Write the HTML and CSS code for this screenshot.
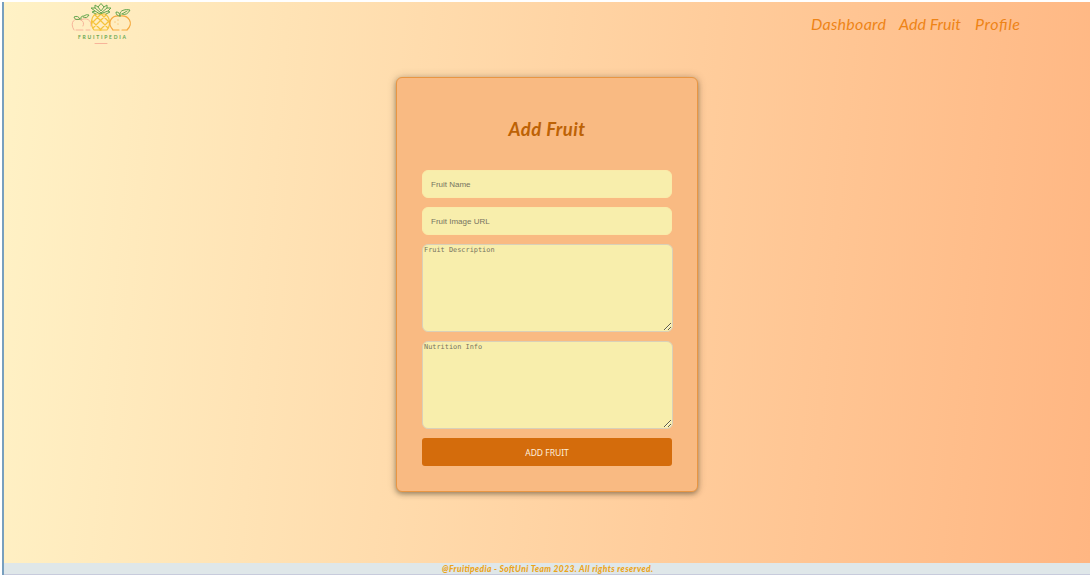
FILE: index.html
```html
<!DOCTYPE html>
<html lang="en">
<head>
<meta charset="utf-8">
<title>Fruitipedia</title>
<link rel="stylesheet" href="styles.css">
</head>
<body>
<div class="page">
  <header class="header">
    <a class="logo" aria-label="Fruitipedia">
      <svg width="64" height="46" viewBox="0 0 64 46" fill="none" stroke-width="1" stroke-linecap="round" stroke-linejoin="round">
        <g stroke="#f7b49a">
          <path d="M4 27C-1 19 5 14 11 17C16 14 22 17 21 23M11 17Q15 19 13 23M6 27H13M16 27H20"/>
          <path d="M25 40.5H37"/>
        </g>
        <g stroke="#f5c33b" stroke-width="1.2">
          <path d="M24 27C20 22 21 13 26 11H35C40 14 41 22 37 27Z"/>
          <path d="M25 12L38 25M22 18L31 27M31 11L39 19M36 12L23 25M39 18L30 27M31 11L22 20"/>
        </g>
        <g stroke="#f5a93f" stroke-width="1.2">
          <path d="M43 27C36 19 42 12 50 13C59 12 64 20 57 27M44 27H49M52 27H57"/>
          <path d="M45 19V19.1M48 17V17.1M48 21V21.1" stroke-width="1"/>
        </g>
        <g stroke="#65a64f">
          <path d="M26 11L22 9L25 8L21 5L25 5L25 2L28 4L31 0.5L34 4L37 2L37 5L41 5L38 8L40 9L36 11M25 8L30 11L38 8M25 5L31 10L37 5M28 4L31 8L34 4"/>
          <path d="M11 16Q10 13 14 13Q16 11 19 12Q17 16 13 14M10 16Q5 18 4 14Q8 12 10 16"/>
          <path d="M50 13Q49 8 54 7Q56 6 60 7Q57 13 52 11M50 13Q46 13 46 9Q50 9 50 13M52 11L57 8"/>
        </g>
        <text class="logo-text" x="8" y="36" textLength="48">FRUITIPEDIA</text>
      </svg>
    </a>
    <nav class="nav">
      <a><svg class="nav-label" width="76" height="30"><text x="1" y="21" textLength="75" lengthAdjust="spacing">Dashboard</text></svg></a>
      <a><svg class="nav-label" width="63" height="30"><text x="0" y="21" textLength="62" lengthAdjust="spacing">Add Fruit</text></svg></a>
      <a><svg class="nav-label" width="46" height="30"><text x="0" y="21" textLength="45" lengthAdjust="spacing">Profile</text></svg></a>
    </nav>
  </header>
  <main class="main">
    <form class="card">
      <h2 class="title">Add Fruit</h2>
      <input class="field" type="text" placeholder="Fruit Name">
      <input class="field" type="text" placeholder="Fruit Image URL">
      <textarea class="area" placeholder="Fruit Description"></textarea>
      <textarea class="area" placeholder="Nutrition Info"></textarea>
      <button class="submit" type="button">ADD FRUIT</button>
    </form>
  </main>
  <footer class="footer"><svg width="212" height="12"><text x="1" y="8.5" textLength="211" lengthAdjust="spacing">@Fruitipedia - SoftUni Team 2023. All rights reserved.</text></svg></footer>
</div>
</body>
</html>
```
FILE: styles.css
```css
* { box-sizing: border-box; }
body { margin: 0; padding: 2px; height: 577px; background: #fff; overflow: hidden; }
.page {
  display: flex;
  flex-direction: column;
  height: 573px;
  border-left: 2px solid #789fbe;
  background: linear-gradient(95deg, #fff2c6 0%, #ffb682 100%);
}
.header {
  display: flex;
  justify-content: space-between;
  height: 75px;
  padding: 0 69px 0 66px;
}
.logo { height: 47px; padding-top: 1px; }
.logo svg { display: block; overflow: visible; }
.logo-text { font: 700 5px Lato, sans-serif; fill: #65a64f; stroke: none; }
.nav { display: flex; gap: 13px; padding-top: 7px; }
.nav-label { display: block; overflow: visible; font: italic 400 16px Lato, sans-serif; fill: #ee8417; }
.main { flex: 1; }
.card {
  display: flex;
  flex-direction: column;
  gap: 9px;
  width: 302px;
  height: 415px;
  margin-left: 392px;
  padding: 39px 25px 25px;
  border: 1px solid #e99643;
  border-radius: 6px;
  background: #f9ba82;
  box-shadow: 0 2px 5px rgba(60, 50, 30, .45), 0 0 10px rgba(60, 50, 30, .2);
}
.title {
  flex: none;
  height: 24px;
  margin: 0 0 20px;
  color: #bd6205;
  font: italic 700 18.5px/25px Lato, sans-serif;
  letter-spacing: .5px;
  text-align: center;
}
.field {
  width: 250px;
  height: 28px;
  flex: none;
  padding: 0 8px;
  border: 1px solid #faeba9;
  border-radius: 6px;
  outline: 0;
  background: #f8eeac;
  font: 8px "Liberation Sans", Arial, sans-serif;
}
.area {
  display: block;
  width: 251px;
  height: 88px;
  flex: none;
  margin: 0;
  padding: 1px;
  border: 1px solid #d9d0b8;
  border-radius: 6px;
  background: #f8eeac;
  font: 6.9px "DejaVu Sans Mono", monospace;
}
.field::placeholder, .area::placeholder { color: #777461; opacity: 1; }
.submit {
  width: 250px;
  height: 28px;
  flex: none;
  padding: 0;
  border: 0;
  border-radius: 3px;
  background: #d46c0c;
  color: #fff0dd;
  font: 8.5px "Noto Sans", sans-serif;
}
.footer {
  display: flex;
  justify-content: center;
  height: 12px;
  background: #dfe7e9;
  border-bottom: 1px solid #c7cbdc;
}
.footer text { font: italic 900 8.5px Lato, sans-serif; fill: #eba51c; }
```
